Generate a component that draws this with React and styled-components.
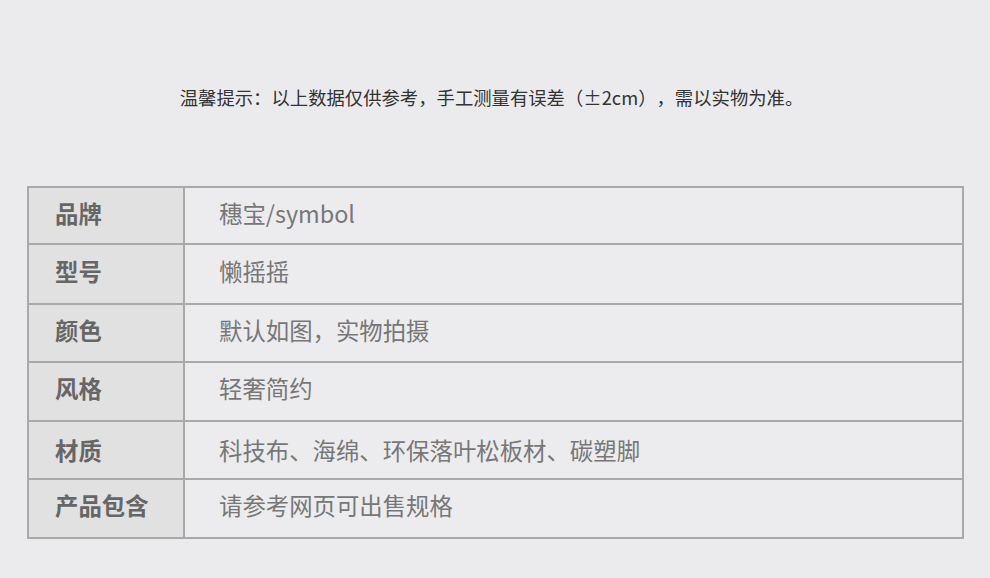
import React from "react";
import styled, { createGlobalStyle } from "styled-components";

const Global = createGlobalStyle`
  html, body { margin: 0; padding: 0; background: #ebebed; }
  body { font-family: "Noto Sans CJK SC", "Noto Sans", sans-serif; text-spacing-trim: space-all; }
`;

const Page = styled.div`
  width: 990px;
  height: 578px;
  background: #ebebed;
  padding-top: 85px;
  box-sizing: border-box;
`;

const Notice = styled.p`
  margin: 0 0 77px;
  text-align: center;
  font-size: 18.35px;
  line-height: 24px;
  color: #333;
  padding-right: 7px;
  text-spacing-trim: space-all;
  white-space: nowrap;
`;

const Table = styled.div`
  margin-left: 27px;
  width: 937px;
  box-sizing: border-box;
  border: 2px solid #a9a9a9;
  display: flex;
  flex-direction: column;
`;

const Row = styled.div`
  display: grid;
  grid-template-columns: 156px 1fr;
  height: ${(p) => p.$h}px;
  border-top: ${(p) => (p.$first ? "none" : "2px solid #a9a9a9")};
`;

const Label = styled.div`
  background: #e1e1e1;
  border-right: 2px solid #a9a9a9;
  display: flex;
  align-items: center;
  padding-left: 26px;
  padding-bottom: ${(p) => p.$lift}px;
  font-size: 23.4px;
  font-weight: 700;
  color: #666;
`;

const Value = styled.div`
  background: #ececee;
  display: flex;
  align-items: center;
  padding-left: 34px;
  padding-bottom: ${(p) => p.$lift}px;
  font-size: 23.4px;
  color: #777;
  white-space: nowrap;
`;

const rows = [
  { k: "品牌", v: "穗宝/symbol", h: 55, lift: 6 },
  { k: "型号", v: "懒摇摇", h: 58, lift: 7 },
  { k: "颜色", v: "默认如图，实物拍摄", h: 56, lift: 7 },
  { k: "风格", v: "轻奢简约", h: 57, lift: 7 },
  { k: "材质", v: "科技布、海绵、环保落叶松板材、碳塑脚", h: 56, lift: 0 },
  { k: "产品包含", v: "请参考网页可出售规格", h: 57, lift: 7 },
];

export default function App() {
  return (
    <Page>
      <Global />
      <Notice>温馨提示：以上数据仅供参考，手工测量有误差（±2cm），需以实物为准。</Notice>
      <Table>
        {rows.map((r, i) => (
          <Row key={r.k} $h={r.h} $first={i === 0}>
            <Label $lift={r.lift}>{r.k}</Label>
            <Value $lift={r.lift}>{r.v}</Value>
          </Row>
        ))}
      </Table>
    </Page>
  );
}
